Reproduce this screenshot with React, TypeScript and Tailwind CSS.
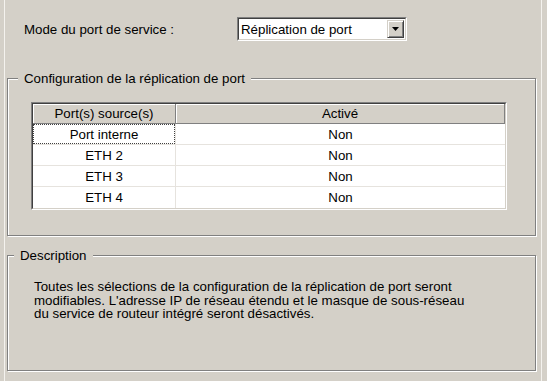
import React from 'react';

const rows = [
  { port: 'Port interne', enabled: 'Non' },
  { port: 'ETH 2', enabled: 'Non' },
  { port: 'ETH 3', enabled: 'Non' },
  { port: 'ETH 4', enabled: 'Non' },
];

function Dropdown() {
  return (
    <div className="flex h-[24px] w-[170px] border border-t-[#808080] border-l-[#808080] border-b-white border-r-white">
      <div className="flex flex-1 items-center border border-t-[#404040] border-l-[#404040] border-b-[#d4d0c8] border-r-[#d4d0c8] bg-white">
        <span className="flex-1 pl-[2px]">Réplication de port</span>
        <div className="mr-[1px] flex h-[18px] w-[17px] items-center justify-center border border-t-[#d4d0c8] border-l-[#d4d0c8] border-b-[#404040] border-r-[#404040] bg-[#d4d0c8] shadow-[inset_1px_1px_0_#fff,inset_-1px_-1px_0_#808080]">
          <svg width="7" height="4" viewBox="0 0 7 4">
            <path d="M0 0h7L3.5 4z" fill="#000" />
          </svg>
        </div>
      </div>
    </div>
  );
}

export default function App() {
  return (
    <div
      className="h-[381px] w-[547px] overflow-hidden bg-[#d4d0c8] text-[13.3px] leading-[15px] text-black"
      style={{ fontFamily: '"Liberation Sans", Arial, sans-serif' }}
    >
      <div className="ml-[4px] h-full w-[538px] border-x border-x-[#f4f2ee]">
        <div className="flex items-center pt-[17px]">
          <span className="ml-[19px] w-[213px]">Mode du port de service :</span>
          <Dropdown />
        </div>

        <fieldset className="ml-[2px] mt-[30px] h-[165px] w-[529px] border border-[#808080] shadow-[inset_1px_1px_0_#fff,1px_1px_0_#fff]">
          <legend className="ml-[10px] bg-[#d4d0c8] px-[6px]">Configuration de la réplication de port</legend>
          <div className="ml-[23px] mt-[16px] w-[476px] border border-t-[#808080] border-l-[#808080] border-b-white border-r-white">
            <div className="border border-t-[#404040] border-l-[#404040] border-b-[#d4d0c8] border-r-[#d4d0c8] bg-white">
              <div className="flex h-[20px] bg-[#d4d0c8]">
                <div className="flex w-[143px] items-center justify-center border-r border-b border-r-[#808080] border-b-[#808080] shadow-[inset_1px_1px_0_#fff]">
                  Port(s) source(s)
                </div>
                <div className="flex flex-1 items-center justify-center border-b border-r border-b-[#808080] border-r-[#808080] shadow-[inset_1px_1px_0_#fff]">
                  Activé
                </div>
              </div>
              {rows.map((r, i) => (
                <div key={r.port} className="flex h-[21px] border-b border-[#e6e3de] last:border-b-0">
                  <div className="flex w-[143px] items-center justify-center border-r border-[#e6e3de]">
                    {i === 0 ? (
                      <span className="flex h-full w-full items-center justify-center border border-dotted border-[#404040]">
                        {r.port}
                      </span>
                    ) : (
                      r.port
                    )}
                  </div>
                  <div className="flex flex-1 items-center justify-center">{r.enabled}</div>
                </div>
              ))}
            </div>
          </div>
        </fieldset>

        <fieldset className="ml-[2px] mt-[12px] h-[123px] w-[529px] border border-[#808080] shadow-[inset_1px_1px_0_#fff,1px_1px_0_#fff]">
          <legend className="ml-[6px] bg-[#d4d0c8] px-[6px]">Description</legend>
          <p className="ml-[26px] mt-[17px] leading-[13.5px]">
            Toutes les sélections de la configuration de la réplication de port seront
            <br />
            modifiables. L'adresse IP de réseau étendu et le masque de sous-réseau
            <br />
            du service de routeur intégré seront désactivés.
          </p>
        </fieldset>
      </div>
    </div>
  );
}
